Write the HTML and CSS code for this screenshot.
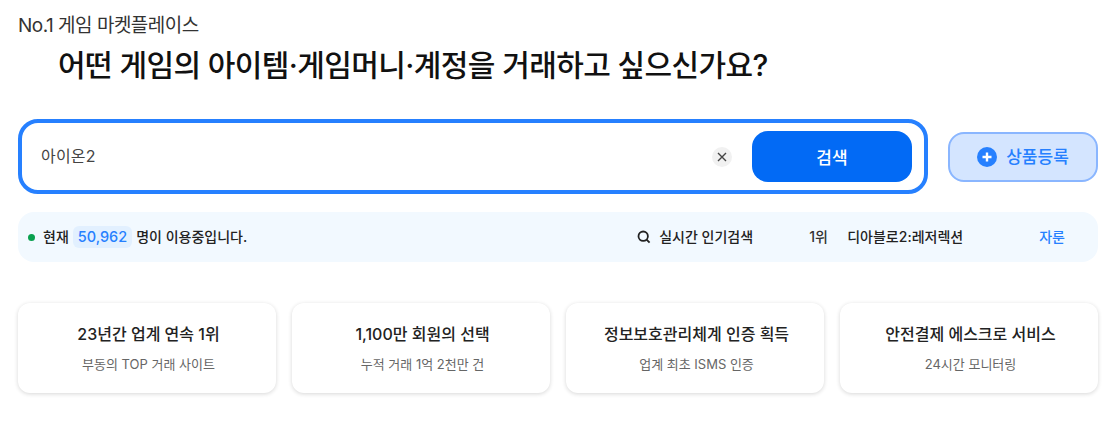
FILE: index.html
```html
<!DOCTYPE html>
<html lang="ko">
<head>
<meta charset="utf-8">
<title>No.1 게임 마켓플레이스</title>
<link rel="stylesheet" href="styles.css">
</head>
<body>
<main class="page">
  <p class="eyebrow">No.1 게임 마켓플레이스</p>
  <h1 class="headline">어떤 게임의 아이템·게임머니·계정을 거래하고 싶으신가요?</h1>
  <div class="search-row">
    <form class="search-box">
      <span class="search-value">아이온2</span>
      <span class="clear">
        <svg width="10" height="10" viewBox="0 0 10 10"><path d="M1 1l8 8M9 1l-8 8" stroke="#444" stroke-width="1.4" fill="none"/></svg>
      </span>
      <button class="search-btn" type="button">검색</button>
    </form>
    <a class="register">
      <svg class="plus" width="20" height="20" viewBox="0 0 20 20"><circle cx="10" cy="10" r="10" fill="#2680ff"/><path d="M10 5.5v9M5.5 10h9" stroke="#fff" stroke-width="2.4" fill="none"/></svg>
      <span class="register-label">상품등록</span>
    </a>
  </div>
  <div class="status">
    <div class="users">
      <span class="dot"></span>
      <span>현재</span>
      <span class="count">50,962</span>
      <span>명이 이용중입니다.</span>
    </div>
    <div class="popular">
      <svg class="mag" width="14" height="14" viewBox="0 0 14 14"><circle cx="6.2" cy="6.2" r="4.7" stroke="#222" stroke-width="1.8" fill="none"/><path d="M9.6 9.6l3 3" stroke="#222" stroke-width="1.8" fill="none"/></svg>
      <span class="popular-label">실시간 인기검색</span>
      <span class="rank">1위</span>
      <span class="term">디아블로2:레저렉션</span>
      <span class="server">자룬</span>
    </div>
  </div>
  <section class="cards">
    <article class="card"><h2>23년간 업계 연속 1위</h2><p>부동의 TOP 거래 사이트</p></article>
    <article class="card"><h2>1,100만 회원의 선택</h2><p>누적 거래 1억 2천만 건</p></article>
    <article class="card"><h2>정보보호관리체계 인증 획득</h2><p>업계 최초 ISMS 인증</p></article>
    <article class="card"><h2>안전결제 에스크로 서비스</h2><p>24시간 모니터링</p></article>
  </section>
</main>
</body>
</html>
```

FILE: styles.css
```css
* { box-sizing: border-box; }
html, body { margin: 0; padding: 0; background: #fff; }
body {
  font-family: Inter, "Noto Sans CJK KR", sans-serif;
  color: #222;
  width: 1120px;
  height: 426px;
  overflow: hidden;
}
.page { padding: 12px 22px 0 18px; }
.eyebrow {
  margin: 0;
  font-size: 19px;
  line-height: 28px;
  letter-spacing: -0.5px;
  color: #333;
}
.headline {
  margin: 3px 0 0 40px;
  font-size: 30px;
  line-height: 44px;
  font-weight: 500;
  letter-spacing: -0.6px;
  color: #111;
}
.search-row {
  display: flex;
  align-items: center;
  gap: 20px;
  margin-top: 32px;
}
.search-box {
  flex: none;
  width: 910px;
  height: 75px;
  border: 4px solid #2680ff;
  border-radius: 20px;
  display: flex;
  align-items: center;
  padding: 0 12px 0 19px;
  margin: 0;
}
.search-value { flex: 1; font-size: 16px; line-height: 22px; padding-bottom: 1px; letter-spacing: 0.2px; color: #444; }
.clear {
  width: 20px;
  height: 20px;
  border-radius: 50%;
  background: #f1f1f1;
  display: flex;
  align-items: center;
  justify-content: center;
  margin-right: 20px;
}
.search-btn {
  width: 160px;
  height: 51px;
  border: 0;
  border-radius: 16px;
  background: #026af5;
  color: #fff;
  font: 500 17px Inter, "Noto Sans CJK KR", sans-serif;
}
.register {
  flex: none;
  width: 150px;
  height: 50px;
  border: 2px solid #8ab6ff;
  border-radius: 16px;
  background: #d4e5ff;
  color: #2680ff;
  font-size: 17px;
  font-weight: 500;
  display: flex;
  align-items: center;
  justify-content: center;
  gap: 9px;
}
.register-label { padding-bottom: 2px; }
.status {
  margin-top: 18px;
  height: 50px;
  border-radius: 16px;
  background: #f2f9ff;
  display: flex;
  align-items: center;
  justify-content: space-between;
  padding: 0 33px 3px 10px;
  font-size: 14px;
  font-weight: 500;
  color: #222;
}
.users { display: flex; align-items: center; gap: 4px; }
.dot { width: 7px; height: 7px; border-radius: 50%; background: #0aa14f; margin-right: 4px; margin-top: 3px; }
.count {
  background: #e2f0ff;
  color: #2680ff;
  border-radius: 6px;
  padding: 0 5px;
  line-height: 22px;
  font-size: 14.5px;
  margin-top: 3px;
}
.popular { display: flex; align-items: center; }
.mag { margin-right: 8px; margin-top: 3px; }
.popular-label { width: 150px; }
.rank { width: 38px; color: #333; }
.term { width: 192px; }
.server { color: #2680ff; }
.cards {
  margin-top: 41px;
  display: grid;
  grid-template-columns: repeat(4, 258px);
  gap: 16px;
}
.card {
  height: 90px;
  border-radius: 12px;
  background: #fff;
  box-shadow: 0 1px 4px rgba(0, 0, 0, 0.16);
  text-align: center;
  padding: 19px 0 0 3px;
}
.card h2 { margin: 0; font-size: 16px; line-height: 24px; font-weight: 500; color: #222; }
.card p { margin: 8px 0 0; font-size: 13px; line-height: 20px; color: #666; }
```
